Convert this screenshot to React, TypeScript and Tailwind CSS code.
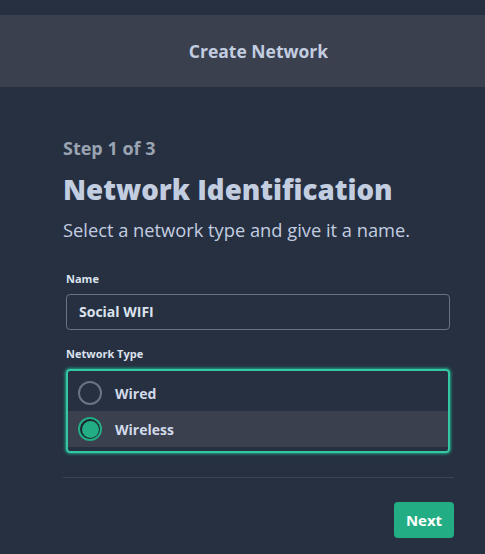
import { useState } from "react";

const types = ["Wired", "Wireless"];

export default function App() {
  const [name, setName] = useState("Social WIFI");
  const [type, setType] = useState("Wireless");

  return (
    <div className="min-h-[554px] w-[485px] bg-[#263040] pt-[15px] font-['Open_Sans',sans-serif] text-[#c3cde0]">
      <header className="flex h-[72px] items-center justify-center bg-[#3a404e] pl-[32px]">
        <h1 className="text-[17.5px] font-bold text-[#c3cde0]">Create Network</h1>
      </header>

      <div className="px-[63px] pt-[48px]">
        <p className="text-[18px] font-bold text-[#9aa3b1]">Step 1 of 3</p>
        <h2 className="mt-[9px] text-[27.7px] leading-[36px] font-extrabold text-[#c3cde0]">
          Network Identification
        </h2>
        <p className="mt-[9px] text-[18.3px] text-[#c3cde0]">
          Select a network type and give it a name.
        </p>

        <div className="ml-[3px] mt-[28px] mr-[-31px]">
          <label className="block text-[11px] font-bold text-[#dbe2ee]">Name</label>
          <input
            value={name}
            onChange={(e) => setName(e.target.value)}
            className="mt-[6px] h-[36px] w-[384px] rounded-[4px] border border-[#6b7280] bg-transparent px-[12px] text-[14px] font-bold text-[#dbe2ee] outline-none"
          />

          <label className="mt-[16px] block text-[11px] font-bold text-[#dbe2ee]">Network Type</label>
          <div className="mt-[7px] w-[384px] overflow-hidden rounded-[4px] border-2 border-[#35c7a4] py-[4px] shadow-[0_0_3px_1px_#1fa386]">
            {types.map((t) => {
              const on = t === type;
              return (
                <button
                  key={t}
                  onClick={() => setType(t)}
                  className={`flex h-[36px] w-full items-center gap-[13px] px-[10px] text-left ${on ? "bg-[#3a404e]" : ""}`}
                >
                  {on ? (
                    <span className="flex h-[24px] w-[24px] items-center justify-center rounded-full border-2 border-[#22ad84] bg-[#1d2430]">
                      <span className="h-[17px] w-[17px] rounded-full bg-[#22ad84]" />
                    </span>
                  ) : (
                    <span className="h-[24px] w-[24px] rounded-full border-2 border-[#6b7383]" />
                  )}
                  <span className="text-[14px] font-bold text-[#d2daea]">{t}</span>
                </button>
              );
            })}
          </div>
        </div>

        <div className="mr-[-32px] mt-[24px] border-t border-[#3c4452]" />

        <div className="mr-[-32px] mt-[24px] flex justify-end">
          <button className="h-[36px] w-[60px] rounded-[4px] bg-[#22ad84] text-[15px] font-bold text-white">
            Next
          </button>
        </div>
      </div>
    </div>
  );
}
